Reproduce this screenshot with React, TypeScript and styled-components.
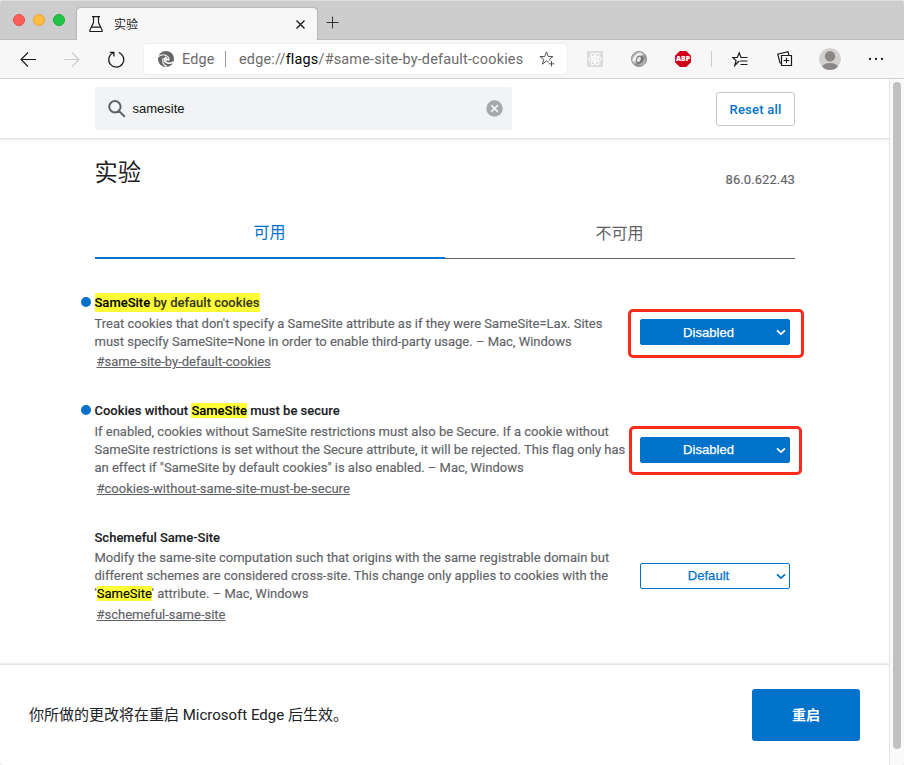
import React from "react";
import styled, { createGlobalStyle, css } from "styled-components";

const GlobalStyle = createGlobalStyle`
  * { box-sizing: border-box; }
  body {
    margin: 0;
    background: #e6e6e6;
    font-family: Roboto, "Noto Sans CJK SC", sans-serif;
    color: #202124;
  }
  svg { display: block; flex: none; overflow: visible; }
  button { font-family: inherit; padding: 0; margin: 0; }
`;

const Window = styled.div`
  width: 904px;
  height: 765px;
  display: flex;
  flex-direction: column;
  overflow: hidden;
  background: #fff;
  border-radius: 4px;
`;

const TabStrip = styled.header`
  height: 40px;
  flex: none;
  display: flex;
  align-items: flex-end;
  background: #cdcdcd;
  border-top: 1px solid #dedede;
  box-shadow: inset 0 -1px 0 #bdbdbd;
`;

const TrafficLights = styled.div`
  width: 77px;
  height: 39px;
  padding: 13px 0 0 13px;
  display: flex;
  gap: 8px;
`;

const Light = styled.span<{ $fill: string; $edge: string }>`
  width: 12px;
  height: 12px;
  border-radius: 50%;
  background: ${(p) => p.$fill};
  border: 1px solid ${(p) => p.$edge};
`;

const BrowserTab = styled.div`
  width: 240px;
  height: 32px;
  padding: 0 11px 0 11px;
  display: flex;
  align-items: center;
  background: #f7f7f7;
  border-radius: 4px 4px 0 0;
  box-shadow: 0 0 2px rgba(0, 0, 0, 0.35);
  clip-path: inset(-3px -3px 0 -3px);
`;

const TabTitle = styled.span`
  flex: 1;
  margin-left: 10px;
  padding-top: 2px;
  font-size: 12px;
  line-height: 18px;
  color: #1b1b1b;
`;

const NewTab = styled.div`
  height: 32px;
  padding: 8px 0 0 9px;
`;

const Toolbar = styled.nav`
  height: 39px;
  flex: none;
  display: grid;
  grid-template-columns: 144px 423px 1fr;
  align-items: center;
  background: #f7f7f7;
  border-bottom: 1px solid #d2d2d2;
`;

const NavButtons = styled.div`
  display: flex;
  align-items: center;
  gap: 28px;
  padding-left: 20px;
`;

const AddressBar = styled.div`
  height: 30px;
  display: flex;
  align-items: center;
  padding: 0 12px 0 14px;
  background: #fff;
  border-radius: 3px;
  box-shadow: 0 0 2px rgba(0, 0, 0, 0.12);
  font-size: 14.4px;
  color: #6b6b6b;
  white-space: nowrap;
`;

const EngineName = styled.span`
  margin-left: 8px;
  width: 43px;
  letter-spacing: 0.2px;
`;

const Divider = styled.span<{ $color: string }>`
  width: 1px;
  height: 16px;
  background: ${(p) => p.$color};
`;

const Url = styled.span`
  margin-left: 13px;
  flex: 1;
  letter-spacing: 0.2px;
  b { font-weight: 400; color: #000; }
`;

const Extensions = styled.div`
  display: grid;
  grid-template-columns: 44px 44px 44px 13px 44px 45px 46px 46px;
  justify-items: center;
  align-items: center;
  padding-left: 6px;
`;

const Viewport = styled.div`
  flex: 1;
  display: grid;
  grid-template-columns: 889px 15px;
  min-height: 0;
`;

const ScrollTrack = styled.div`
  background: #fafafa;
  border-left: 1px solid #e4e4e4;
  padding: 3px 0 0 3px;
`;

const ScrollThumb = styled.div`
  width: 8px;
  height: 667px;
  border-radius: 4px;
  background: #c1c1c1;
`;

const Page = styled.main`
  display: flex;
  flex-direction: column;
`;

const SearchHeader = styled.div`
  height: 60px;
  flex: none;
  padding: 8px 94px 0 95px;
  display: flex;
  justify-content: space-between;
  border-bottom: 1px solid #e2e2e2;
  box-shadow: 0 1px 2px rgba(0, 0, 0, 0.1);
`;

const SearchBox = styled.div`
  width: 417px;
  height: 43px;
  padding: 0 9.5px 0 13px;
  display: flex;
  align-items: center;
  background: #f1f3f4;
  border-radius: 3px;
`;

const SearchText = styled.span`
  flex: 1;
  margin-left: 6.5px;
  font: 13px/18px "Liberation Sans", sans-serif;
  color: #111;
`;

const ResetButton = styled.button`
  width: 79px;
  height: 34px;
  margin-top: 5px;
  border: 1px solid #c8c8c8;
  border-radius: 3px;
  background: #fff;
  color: #0072c9;
  font-size: 13px;
  font-weight: 500;
  letter-spacing: 0.22px;
`;

const Heading = styled.div`
  height: 80px;
  padding: 0 94px 0 94.5px;
  display: flex;
  justify-content: space-between;
`;

const Title = styled.h1`
  margin: 17px 0 0;
  font-size: 23.3px;
  line-height: 34px;
  font-weight: 400;
`;

const Version = styled.span`
  margin-top: 32px;
  font-size: 13px;
  line-height: 18px;
  letter-spacing: 0.06px;
  color: #5f6368;
  -webkit-text-stroke: 0.15px;
`;

const Tabs = styled.div`
  height: 40px;
  flex: none;
  margin: 0 94px 0 95px;
  display: grid;
  grid-template-columns: 1fr 1fr;
`;

const FlagTab = styled.div<{ $active?: boolean }>`
  text-align: center;
  font-size: 16px;
  line-height: 24px;
  padding: 3px 1px 0 0;
  color: #5f6368;
  border-bottom: 1px solid #5f6368;
  ${(p) =>
    p.$active &&
    css`
      padding-top: 2px;
      color: #0072c9;
      border-bottom: 2px solid #0072c9;
    `}
`;

const FlagList = styled.div`
  flex: 1;
  padding: 34px 0 0 80.5px;
`;

const Flag = styled.section<{ $height: number }>`
  height: ${(p) => p.$height}px;
  display: grid;
  grid-template-columns: 14px 545.5px 150px;
  align-items: start;
`;

const Dot = styled.span<{ $visible: boolean }>`
  width: 10px;
  height: 10px;
  margin-top: 4px;
  border-radius: 50%;
  background: ${(p) => (p.$visible ? "#0072c9" : "transparent")};
`;

const FlagTitle = styled.h3<{ $height: number }>`
  margin: 1px 0 0;
  height: ${(p) => p.$height}px;
  font-size: 13px;
  line-height: 18px;
  font-weight: 500;
  letter-spacing: 0;
  white-space: nowrap;
  -webkit-text-stroke: 0.1px;
`;

const TitleMark = styled.mark<{ $tall?: boolean }>`
  background: #ffff37;
  color: #000;
  padding: ${(p) => (p.$tall ? "2px 0" : "0")};
`;

const Tint = styled.span`
  color: #38391c;
`;

const Line = styled.div`
  height: 18px;
  font-size: 13px;
  line-height: 18px;
  letter-spacing: -0.004px;
  color: #5f6368;
  white-space: nowrap;
  -webkit-text-stroke: 0.15px;
`;

const Permalink = styled.a<{ $gap: number }>`
  display: block;
  margin: ${(p) => p.$gap}px 0 0 2px;
  font-size: 13px;
  line-height: 19px;
  color: #5f6368;
  text-decoration: underline;
  -webkit-text-stroke: 0.15px;
`;

const SelectWrap = styled.div<{ $top: number }>`
  position: relative;
  margin-top: ${(p) => p.$top}px;
`;

const Select = styled.div<{ $filled: boolean }>`
  height: 26px;
  padding: 0 3px 0 12px;
  display: flex;
  align-items: center;
  border: 1px solid #0072c9;
  border-radius: 2px;
  background: ${(p) => (p.$filled ? "#0072c9" : "#fff")};
  color: ${(p) => (p.$filled ? "#fff" : "#0072c9")};
  font: 13px/18px "Liberation Sans", sans-serif;
  letter-spacing: 0.05px;
  -webkit-text-stroke: 0.25px;
`;

const SelectLabel = styled.span<{ $drop: number }>`
  flex: 1;
  text-align: center;
  padding: ${(p) => p.$drop}px 12px 0 0;
`;

const RedOutline = styled.div<{ $wide: boolean }>`
  position: absolute;
  left: ${(p) => (p.$wide ? -12 : -11)}px;
  top: ${(p) => (p.$wide ? -10 : -11)}px;
  width: ${(p) => (p.$wide ? 176 : 173)}px;
  height: 49px;
  border: 3px solid #fb2c1c;
  border-radius: 5px;
`;

const Footer = styled.footer`
  height: 101px;
  flex: none;
  padding: 0 29px 1px;
  display: flex;
  align-items: center;
  justify-content: space-between;
  border-top: 1px solid #e3e3e3;
  box-shadow: 0 -1px 2px rgba(0, 0, 0, 0.1);
  font-size: 15px;
`;

const FooterText = styled.span`
  padding-bottom: 2px;
`;

const RestartButton = styled.button`
  width: 108px;
  height: 52px;
  border: 0;
  border-radius: 3px;
  padding-bottom: 2px;
  background: #0072c9;
  color: #fff;
  font-size: 14px;
  font-weight: 700;
`;

const AbpShape = styled.span`
  width: 16px;
  height: 16px;
  display: flex;
  align-items: center;
  justify-content: center;
  background: #d0021b;
  clip-path: polygon(30% 0, 70% 0, 100% 30%, 100% 70%, 70% 100%, 30% 100%, 0 70%, 0 30%);
  color: #fff;
  font: 800 7px/16px "Open Sans", sans-serif;
  letter-spacing: -0.1px;
`;

const Stroke = ({ w, h, d, color = "#1b1b1b", sw = 1 }: { w: number; h: number; d: string; color?: string; sw?: number }) => (
  <svg width={w} height={h} viewBox={`0 0 ${w} ${h}`} fill="none" stroke={color} strokeWidth={sw}>
    <path d={d} />
  </svg>
);

const EdgeLogo = () => (
  <svg width="16" height="16" viewBox="0 0 16 16">
    <circle cx="8" cy="8" r="8" fill="#666" />
    <path d="M0 5.8C3 3.6 7 3.3 9.6 5.4C11 6.6 11.3 8.3 10.4 9.7" fill="none" stroke="#fff" strokeWidth="1.1" />
    <path d="M5.2 7.1C3.6 10.2 5.2 14 9 15.6" fill="none" stroke="#fff" strokeWidth="1.1" />
    <path d="M8.1 6.3C5.9 7.1 5.8 10 7.7 11.2C10 12.8 13.4 12.1 15.5 10.8" fill="none" stroke="#fff" strokeWidth="1.5" />
    <path d="M7 8.2C7 6.8 8.1 6.2 9.2 6.9C10.2 7.6 10.2 9 9.3 9.8C8.3 10.2 7 9.6 7 8.2" fill="#fff" />
  </svg>
);

const ReactBadge = () => (
  <svg width="16" height="16" viewBox="0 0 16 16">
    <path d="M0 0H16V16H0z" fill="#dcdcdc" />
    <g fill="none" stroke="#fff">
      <ellipse cx="8" cy="8" rx="6.4" ry="2.5" />
      <ellipse cx="8" cy="8" rx="6.4" ry="2.5" transform="rotate(60 8 8)" />
      <ellipse cx="8" cy="8" rx="6.4" ry="2.5" transform="rotate(120 8 8)" />
    </g>
    <circle cx="8" cy="8" r="1.4" fill="#fff" />
  </svg>
);

const SilverBadge = () => (
  <svg width="16" height="16" viewBox="0 0 16 16">
    <defs>
      <linearGradient id="silver" x1="0" y1="0" x2="1" y2="1">
        <stop offset="0" stopColor="#777" />
        <stop offset="0.35" stopColor="#e5e5e5" />
        <stop offset="0.6" stopColor="#929292" />
        <stop offset="1" stopColor="#dedede" />
      </linearGradient>
    </defs>
    <circle cx="8" cy="8" r="7.5" fill="url(#silver)" stroke="#8c8c8c" />
    <path d="M2.6 10C2 4 7 1.4 12.7 3.4C8.5 3.2 5.6 5.5 5.4 10z" fill="#f5f5f5" />
    <path d="M11 4.5C14.5 8 11 13.5 4.5 13.4C8.5 12.4 11.4 9 9.6 5.6z" fill="#6c6c6c" />
    <ellipse cx="8" cy="8.3" rx="2.4" ry="3.2" transform="rotate(25 8 8)" fill="#e4e4e4" stroke="#777" />
  </svg>
);

const Avatar = () => (
  <svg width="22" height="22" viewBox="0 0 22 22">
    <defs><clipPath id="avatar"><circle cx="11" cy="11" r="11" /></clipPath></defs>
    <g clipPath="url(#avatar)">
      <circle cx="11" cy="11" r="11" fill="#d3d1cf" />
      <circle cx="11" cy="8.2" r="5.2" fill="#8a8786" />
      <ellipse cx="11" cy="20" rx="8.2" ry="5" fill="#8a8786" />
    </g>
  </svg>
);

interface FlagData {
  title: React.ReactNode;
  titleHeight: number;
  lines: React.ReactNode[];
  link: string;
  linkGap: number;
  value: string;
  modified: boolean;
  height: number;
  selectTop: number;
  labelDrop: number;
  outline?: "wide" | "narrow";
}

const flags: FlagData[] = [
  {
    title: <TitleMark $tall>SameSite<Tint> by default cookies</Tint></TitleMark>,
    titleHeight: 21,
    lines: [
      "Treat cookies that don't specify a SameSite attribute as if they were SameSite=Lax. Sites",
      "must specify SameSite=None in order to enable third-party usage. – Mac, Windows",
    ],
    link: "#same-site-by-default-cookies",
    linkGap: 1,
    value: "Disabled",
    modified: true,
    height: 108,
    selectTop: 26,
    labelDrop: 2,
    outline: "wide",
  },
  {
    title: <>Cookies without <TitleMark>SameSite</TitleMark> must be secure</>,
    titleHeight: 21,
    lines: [
      "If enabled, cookies without SameSite restrictions must also be Secure. If a cookie without",
      "SameSite restrictions is set without the Secure attribute, it will be rejected. This flag only has",
      'an effect if "SameSite by default cookies" is also enabled. – Mac, Windows',
    ],
    link: "#cookies-without-same-site-must-be-secure",
    linkGap: 2,
    value: "Disabled",
    modified: true,
    height: 127,
    selectTop: 36,
    labelDrop: 0,
    outline: "narrow",
  },
  {
    title: "Schemeful Same-Site",
    titleHeight: 20,
    lines: [
      "Modify the same-site computation such that origins with the same registrable domain but",
      "different schemes are considered cross-site. This change only applies to cookies with the",
      <>'<TitleMark>SameSite</TitleMark>' attribute. – Mac, Windows</>,
    ],
    link: "#schemeful-same-site",
    linkGap: 2,
    value: "Default",
    modified: false,
    height: 120,
    selectTop: 35,
    labelDrop: 0,
  },
];

export default function App() {
  return (
    <>
      <GlobalStyle />
      <Window>
        <TabStrip>
          <TrafficLights>
            <Light $fill="#ff5d58" $edge="#e84a46" />
            <Light $fill="#ffbc3e" $edge="#e5a435" />
            <Light $fill="#20c547" $edge="#16ac37" />
          </TrafficLights>
          <BrowserTab>
            <Stroke w={16} h={18} sw={1.2} d="M4 1.6H12M5.5 2V7.5L1.7 15.6Q1.5 16.5 2.5 16.5H13.5Q14.5 16.5 14.3 15.6L10.5 7.5V2M3.5 12.2H12.5" />
            <TabTitle>实验</TabTitle>
            <Stroke w={11} h={11} sw={1.4} d="M1.5 1.5L9.5 9.5M9.5 1.5L1.5 9.5" />
          </BrowserTab>
          <NewTab><Stroke w={13} h={13} d="M6.5 0.5V12.5M0.5 6.5H12.5" color="#333" /></NewTab>
        </TabStrip>
        <Toolbar>
          <NavButtons>
            <Stroke w={16} h={15} sw={1.15} d="M16 7.5H1M8 0.5L1 7.5L8 14.5" />
            <Stroke w={16} h={15} sw={1.15} color="#ccc" d="M0 7.5H15M8 0.5L15 7.5L8 14.5" />
            <Stroke w={17} h={17} sw={1.25} d="M5.3 1.7A7.5 7.5 0 1 0 10.7 1.5M1.8 1.4H5.9V5.5" />
          </NavButtons>
          <AddressBar>
            <EdgeLogo />
            <EngineName>Edge</EngineName>
            <Divider $color="#999" />
            <Url>edge://<b>flags</b>/#same-site-by-default-cookies</Url>
            <Stroke w={16} h={16} color="#555" d="M9.5 11.2L7.5 10L3.3 13.2L4.8 8.3L0.9 5.5H5.8L7.5 0.9L9.2 5.5H14L10.6 8.2L11.1 9.5M12.5 10V15.5M9.8 12.8H15.3" />
          </AddressBar>
          <Extensions>
            <ReactBadge />
            <SilverBadge />
            <AbpShape>ABP</AbpShape>
            <Divider $color="#ccc" />
            <Stroke w={16} h={15} sw={1.2} d="M7.5 9.3L6.5 9.5L2.9 13.5L4 8.7L0.9 5.5H5.3L7.2 0.8L9 5.5H15.5M8.2 9H15.5M8.5 12.5H15.5" />
            <Stroke w={16} h={16} sw={1.2} d="M4.5 4.5H14.5V14.5H4.5zM9.5 6.7V12.3M6.7 9.5H12.3M4.2 12.3L3 11.8L0.8 3.2L11 0.7L11.8 4" />
            <Avatar />
            <svg width="16" height="4" viewBox="0 0 16 4" fill="#222"><circle cx="2" cy="2" r="1.15" /><circle cx="8" cy="2" r="1.15" /><circle cx="14" cy="2" r="1.15" /></svg>
          </Extensions>
        </Toolbar>
        <Viewport>
          <Page>
            <SearchHeader>
              <SearchBox>
                <Stroke w={18} h={18} sw={2} color="#5f6368" d="M12.6 6.8A5.7 5.7 0 1 1 1.2 6.8A5.7 5.7 0 1 1 12.6 6.8M11.1 11.1L16.8 16.8" />
                <SearchText>samesite</SearchText>
                <svg width="17" height="17" viewBox="0 0 17 17"><circle cx="8.5" cy="8.5" r="8.2" fill="#a6a9ab" /><path d="M5.2 5.2L11.8 11.8M11.8 5.2L5.2 11.8" stroke="#f1f3f4" strokeWidth="1.7" /></svg>
              </SearchBox>
              <ResetButton>Reset all</ResetButton>
            </SearchHeader>
            <Heading>
              <Title>实验</Title>
              <Version>86.0.622.43</Version>
            </Heading>
            <Tabs>
              <FlagTab $active>可用</FlagTab>
              <FlagTab>不可用</FlagTab>
            </Tabs>
            <FlagList>
              {flags.map((f) => (
                <Flag key={f.link} $height={f.height}>
                  <Dot $visible={f.modified} />
                  <div>
                    <FlagTitle $height={f.titleHeight}>{f.title}</FlagTitle>
                    {f.lines.map((line, i) => <Line key={i}>{line}</Line>)}
                    <Permalink $gap={f.linkGap}>{f.link}</Permalink>
                  </div>
                  <SelectWrap $top={f.selectTop}>
                    <Select $filled={f.modified}>
                      <SelectLabel $drop={f.labelDrop}>{f.value}</SelectLabel>
                      <Stroke w={10} h={7} sw={1.8} color="currentColor" d="M1 1.3L5 5.1L9 1.3" />
                    </Select>
                    {f.outline && <RedOutline $wide={f.outline === "wide"} />}
                  </SelectWrap>
                </Flag>
              ))}
            </FlagList>
            <Footer>
              <FooterText>你所做的更改将在重启 Microsoft Edge 后生效。</FooterText>
              <RestartButton>重启</RestartButton>
            </Footer>
          </Page>
          <ScrollTrack><ScrollThumb /></ScrollTrack>
        </Viewport>
      </Window>
    </>
  );
}
